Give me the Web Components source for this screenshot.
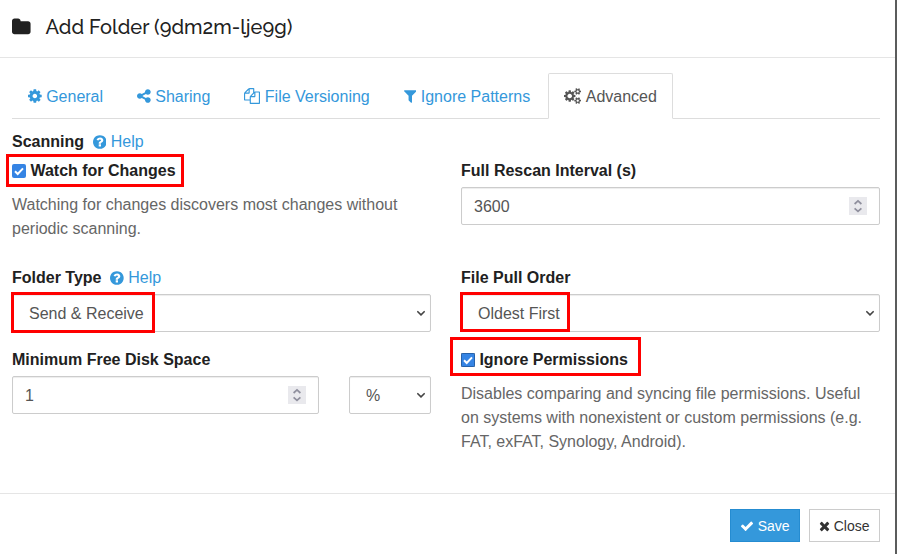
<!DOCTYPE html>
<html lang="en">
<head>
<meta charset="utf-8">
<title>Add Folder</title>
<style>
html,body{margin:0;padding:0;height:554px;overflow:hidden;background:#5b5c5c}
body{font:16px/24px "Liberation Sans",Arial,sans-serif;color:#212121}
</style>
</head>
<body>
<folder-dialog></folder-dialog>
<script>
const ICONS = {
folder:["64 0 1664 1792","M1728 608v704q0 92-66 158t-158 66h-1216q-92 0-158-66t-66-158v-960q0-92 66-158t158-66h320q92 0 158 66t66 158v32h672q92 0 158 66t66 158z"],
cog:["128 0 1536 1792","M1152 896q0-106-75-181t-181-75-181 75-75 181 75 181 181 75 181-75 75-181zm512-109v222q0 12-8 23t-20 13l-185 28q-19 54-39 91 35 50 107 138 10 12 10 25t-9 23q-27 37-99 108t-94 71q-12 0-26-9l-138-108q-44 23-91 38-16 136-29 186-7 28-36 28h-222q-14 0-24.5-8.5t-11.5-21.5l-28-184q-49-16-90-37l-141 107q-10 9-25 9-14 0-25-11-126-114-165-168-7-10-7-23 0-12 8-23 15-21 51-66.5t54-70.5q-27-50-41-99l-183-27q-13-2-21-12.5t-8-23.5v-222q0-12 8-23t19-13l186-28q14-46 39-92-40-57-107-138-10-12-10-24 0-10 9-23 26-36 98.5-107.5t94.5-71.5q13 0 26 10l138 107q44-23 91-38 16-136 29-186 7-28 36-28h222q14 0 24.5 8.5t11.5 21.5l28 184q49 16 90 37l142-107q9-9 24-9 13 0 25 10 129 119 165 170 7 8 7 22 0 12-8 23-15 21-51 66.5t-54 70.5q26 50 41 98l183 28q13 2 21 12.5t8 23.5z"],
share:["128 0 1536 1792","M1344 1024q133 0 226.5 93.5t93.5 226.5-93.5 226.5-226.5 93.5-226.5-93.5-93.5-226.5q0-12 2-34l-360-180q-92 86-218 86-133 0-226.5-93.5t-93.5-226.5 93.5-226.5 226.5-93.5q126 0 218 86l360-180q-2-22-2-34 0-133 93.5-226.5t226.5-93.5 226.5 93.5 93.5 226.5-93.5 226.5-226.5 93.5q-126 0-218-86l-360 180q2 22 2 34t-2 34l360 180q92-86 218-86z"],
files:["0 0 1792 1792","M1696 384q40 0 68 28t28 68v1216q0 40-28 68t-68 28h-960q-40 0-68-28t-28-68v-288h-544q-40 0-68-28t-28-68v-672q0-40 20-88t48-76l408-408q28-28 76-48t88-20h416q40 0 68 28t28 68v328q68-40 128-40h416zm-544 213l-299 299h299v-299zm-640-384l-299 299h299v-299zm196 647l316-316v-416h-384v416q0 40-28 68t-68 28h-416v640h512v-256q0-40 20-88t48-76zm956 804v-1152h-384v416q0 40-28 68t-68 28h-416v640h896z"],
filter:["192 0 1408 1792","M1595 295q17 41-14 70l-493 493v742q0 42-39 59-13 5-25 5-27 0-45-19l-256-256q-19-19-19-45v-486l-493-493q-31-29-14-70 17-39 59-39h1280q42 0 59 39z"],
cogs:["0 0 1920 1792","M896 896q0-106-75-181t-181-75-181 75-75 181 75 181 181 75 181-75 75-181zm768 512q0-52-38-90t-90-38-90 38-38 90q0 53 37.5 90.5t90.5 37.5 90.5-37.5 37.5-90.5zm0-1024q0-52-38-90t-90-38-90 38-38 90q0 53 37.5 90.5t90.5 37.5 90.5-37.5 37.5-90.5zm-384 421v185q0 10-7 19.5t-16 10.5l-155 24q-11 35-32 76 34 48 90 115 7 11 7 20 0 12-7 19-23 30-82.5 89.5t-78.5 59.5q-11 0-21-7l-115-90q-37 19-77 31-11 108-23 155-7 24-30 24h-186q-11 0-20-7.5t-10-17.5l-23-153q-34-10-75-31l-118 89q-7 7-20 7-11 0-21-8-144-133-144-160 0-9 7-19 10-14 41-53t47-61q-23-44-35-82l-152-24q-10-1-17-9.5t-7-19.5v-185q0-10 7-19.5t16-10.5l155-24q11-35 32-76-34-48-90-115-7-11-7-20 0-12 7-20 22-30 82-89t79-59q11 0 21 7l115 90q34-18 77-32 11-108 23-154 7-24 30-24h186q11 0 20 7.5t10 17.5l23 153q34 10 75 31l118-89q8-7 20-7 11 0 21 8 144 133 144 160 0 8-7 19-12 16-42 54t-45 60q23 48 34 82l152 23q10 2 17 10.5t7 19.5zm640 533v140q0 16-149 31-12 27-30 52 51 113 51 138 0 4-4 7-122 71-124 71-8 0-46-47t-52-68q-20 2-30 2t-30-2q-14 21-52 68t-46 47q-2 0-124-71-4-3-4-7 0-25 51-138-18-25-30-52-149-15-149-31v-140q0-16 149-31 13-29 30-52-51-113-51-138 0-4 4-7 4-2 35-20t59-34 30-16q8 0 46 46.5t52 67.5q20-2 30-2t30 2q51-71 92-112l6-2q4 0 124 70 4 3 4 7 0 25-51 138 17 23 30 52 149 15 149 31zm0-1024v140q0 16-149 31-12 27-30 52 51 113 51 138 0 4-4 7-122 71-124 71-8 0-46-47t-52-68q-20 2-30 2t-30-2q-14 21-52 68t-46 47q-2 0-124-71-4-3-4-7 0-25 51-138-18-25-30-52-149-15-149-31v-140q0-16 149-31 13-29 30-52-51-113-51-138 0-4 4-7 4-2 35-20t59-34 30-16q8 0 46 46.5t52 67.5q20-2 30-2t30 2q51-71 92-112l6-2q4 0 124 70 4 3 4 7 0 25-51 138 17 23 30 52 149 15 149 31z"],
question:["128 0 1536 1792","M1024 1376v-192q0-14-9-23t-23-9h-192q-14 0-23 9t-9 23v192q0 14 9 23t23 9h192q14 0 23-9t9-23zm256-672q0-88-55.5-163t-138.5-116-170-41q-243 0-371 213-15 24 8 42l132 100q7 6 19 6 16 0 25-12 53-68 86-92 34-24 86-24 48 0 85.5 26t37.5 59q0 38-20 61t-68 45q-63 28-115.5 86.5t-52.5 125.5v36q0 14 9 23t23 9h192q14 0 23-9t9-23q0-19 21.5-49.5t54.5-49.5q32-18 49-28.5t46-35 44.5-48 28-60.5 12.5-81zm384 192q0 209-103 385.5t-279.5 279.5-385.5 103-385.5-103-279.5-279.5-103-385.5 103-385.5 279.5-279.5 385.5-103 385.5 103 279.5 279.5 103 385.5z"],
check:["0 0 1792 1792","M1671 566q0 40-28 68l-724 724-136 136q-28 28-68 28t-68-28l-136-136-362-362q-28-28-28-68t28-68l136-136q28-28 68-28t68 28l294 295 656-657q28-28 68-28t68 28l136 136q28 28 28 68z"],
times:["192 0 1408 1792","M1490 1322q0 40-28 68l-136 136q-28 28-68 28t-68-28l-294-294-294 294q-28 28-68 28t-68-28l-136-136q-28-28-28-68t28-68l294-294-294-294q-28-28-28-68t28-68l136-136q28-28 68-28t68 28l294 294 294-294q28-28 68-28t68 28l136 136q28 28 28 68t-28 68l-294 294 294 294q28 28 28 68z"]
};
const define = (name, render) => customElements.define(name, class extends HTMLElement {
  connectedCallback(){
    if (this.shadowRoot) return;
    this.attachShadow({mode:"open"}).innerHTML = render(this);
  }
});

define("ui-icon", el => {
  const [box, d] = ICONS[el.getAttribute("name")];
  return `<style>:host{display:inline-flex;flex:none;height:1em}svg{height:1em;width:${box.split(" ")[2]/1792}em;fill:currentColor;display:block}</style><svg viewBox="${box}"><path d="${d}"/></svg>`;
});

define("nav-tab", () => `<style>
:host{display:flex;align-items:center;box-sizing:border-box;height:46px;padding:0 15px;border:1px solid transparent;color:#3498db;white-space:nowrap;margin-right:2px}
:host([active]){background:#fff;color:#555;border-color:#ddd #ddd #fff;border-radius:2px 2px 0 0;margin-right:0}
span{margin-left:4.45px;padding-top:2px}</style><slot name="icon"></slot><span><slot></slot></span>`);

define("help-link", () => `<style>:host{display:inline-flex;align-items:center;font-weight:400;color:#3498db;margin-left:8.6px}span{margin-left:4.45px}</style><ui-icon name="question"></ui-icon><span>Help</span>`);

define("field-label", () => `<style>:host{display:flex;height:24px;font-weight:700;white-space:nowrap}</style><slot></slot>`);

define("check-label", el => `<style>
:host{display:flex;height:24px;align-items:center;font-weight:700;white-space:nowrap}
svg{display:block;width:14px;height:14px;margin-right:4.4px}</style>
<svg viewBox="0 0 14 14"><rect width="14" height="14" rx="2" fill="#3584e4"/>${el.hasAttribute("focused")?'<rect x=".5" y=".5" width="13" height="13" fill="none" stroke="#173f70" stroke-dasharray="1 1"/>':''}<path d="M3 7.3l2.7 2.7L11 4.4" fill="none" stroke="#fff" stroke-width="2"/></svg><span><slot></slot></span>`);

define("help-text", () => `<style>:host{display:block;color:#666;white-space:nowrap}</style><slot></slot>`);

const BOX = `:host{display:flex;align-items:center;box-sizing:border-box;height:38px;border:1px solid #ccc;border-radius:2px;background:#fff;box-shadow:inset 0 1px 1px rgba(0,0,0,.075);color:#555;justify-content:space-between}span{padding-top:2px}`;
define("number-box", () => `<style>${BOX}:host{padding:0 12px}
svg{display:block;width:18px;height:18px;background:#e9e9ed}</style><span><slot></slot></span>
<svg viewBox="0 0 18 18" fill="none" stroke="#8f8f9d" stroke-width="1.7"><path d="M5.6 7L9 3.9 12.4 7M5.6 11.3L9 14.4l3.4-3.1"/></svg>`);
define("select-box", () => `<style>${BOX}:host{padding:0 5px 0 16px}svg{display:block;width:8px;height:6px}</style>
<span><slot></slot></span><svg viewBox="0 0 8 6" fill="none" stroke="#444" stroke-width="1.6"><path d="M.3 1.2L4 4.9 7.7 1.2"/></svg>`);

define("action-button", () => `<style>
:host{display:flex;align-items:center;box-sizing:border-box;height:33px;padding:0 9.5px 0 9px;border:1px solid #ccc;color:#333;font-size:14px;background:#fff;white-space:nowrap}
:host([primary]){background:#3498db;border-color:#258cd1;color:#fff}
span{margin-left:3.6px}</style><slot name="icon"></slot><span><slot></slot></span>`);

define("highlight-box", () => `<style>:host{position:absolute;box-sizing:border-box;border:3px solid #f00;pointer-events:none}</style>`);

define("folder-dialog", () => `<style>
:host{display:block;position:relative;box-sizing:border-box;width:895px;height:554px;background:#fff}
header{display:flex;align-items:center;box-sizing:border-box;height:58px;padding:0 12px 4px;border-bottom:1px solid #e5e5e5}
header ui-icon{font-size:20px}
h4{margin:0 0 0 15px;font:500 20px/24px Raleway,Lato,sans-serif;letter-spacing:0;white-space:nowrap}
nav{display:flex;box-sizing:border-box;height:46px;margin:15px 15px 0 12px;box-shadow:inset 0 -1px #ddd}
main{display:grid;grid-template-columns:419px 419px;column-gap:30px;grid-template-rows:136px 82px 133px;padding:11px 15px 0 12px}
.first{padding-top:29px}
field-label + select-box,field-label + number-box,field-label + .pair{margin-top:4px}
.scan check-label{margin-top:5px}
help-text{margin-top:10px}
.pair{display:grid;grid-template-columns:307px 82px;gap:30px}
footer{display:flex;justify-content:flex-end;gap:9px;border-top:1px solid #e5e5e5;padding:15px 15px 0;margin-top:12px}
</style>
<header><ui-icon name="folder"></ui-icon><h4>Add Folder (9dm2m-lje9g)</h4></header>
<nav>
<nav-tab><ui-icon slot="icon" name="cog"></ui-icon>General</nav-tab>
<nav-tab><ui-icon slot="icon" name="share"></ui-icon>Sharing</nav-tab>
<nav-tab><ui-icon slot="icon" name="files"></ui-icon>File Versioning</nav-tab>
<nav-tab><ui-icon slot="icon" name="filter"></ui-icon>Ignore Patterns</nav-tab>
<nav-tab active><ui-icon slot="icon" name="cogs"></ui-icon>Advanced</nav-tab>
</nav>
<main>
<section class="scan"><field-label>Scanning<help-link></help-link></field-label><check-label>Watch for Changes</check-label><help-text>Watching for changes discovers most changes without<br>periodic scanning.</help-text></section>
<section class="first"><field-label>Full Rescan Interval (s)</field-label><number-box>3600</number-box></section>
<section><field-label>Folder Type<help-link></help-link></field-label><select-box>Send &amp; Receive</select-box></section>
<section><field-label>File Pull Order</field-label><select-box>Oldest First</select-box></section>
<section><field-label>Minimum Free Disk Space</field-label><div class="pair"><number-box>1</number-box><select-box>%</select-box></div></section>
<section><check-label focused>Ignore Permissions</check-label><help-text>Disables comparing and syncing file permissions. Useful<br>on systems with nonexistent or custom permissions (e.g.<br>FAT, exFAT, Synology, Android).</help-text></section>
</main>
<footer><action-button primary><ui-icon slot="icon" name="check"></ui-icon>Save</action-button><action-button><ui-icon slot="icon" name="times"></ui-icon>Close</action-button></footer>
<highlight-box style="left:6px;top:154px;width:178px;height:33px"></highlight-box>
<highlight-box style="left:11px;top:292px;width:144px;height:41px"></highlight-box>
<highlight-box style="left:460px;top:292px;width:110px;height:40px"></highlight-box>
<highlight-box style="left:450px;top:337px;width:191px;height:39px"></highlight-box>`);
</script>
</body>
</html>
